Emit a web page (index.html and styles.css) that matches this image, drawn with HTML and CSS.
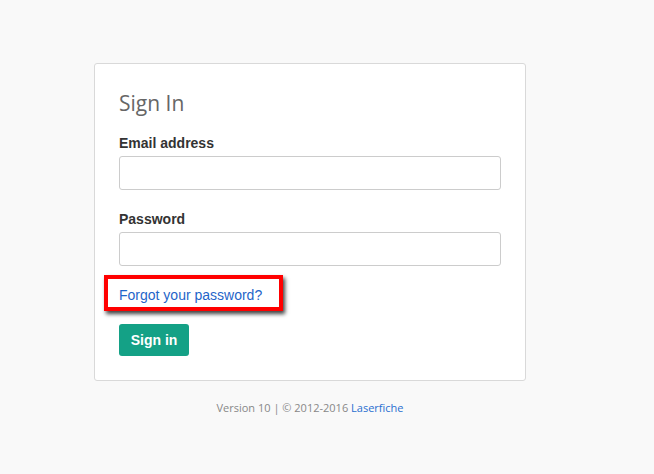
FILE: index.html
```html
<!DOCTYPE html>
<html>
<head>
<meta charset="utf-8">
<link rel="stylesheet" href="styles.css">
</head>
<body>
<div class="page">
  <div class="card">
    <h1 class="title">Sign In</h1>
    <div class="field">
      <label class="label">Email address</label>
      <input class="input" type="text">
    </div>
    <div class="field">
      <label class="label">Password</label>
      <input class="input" type="password">
    </div>
    <div class="forgot-wrap">
      <a class="forgot" href="#">Forgot your password?</a>
    </div>
    <button class="btn">Sign in</button>
  </div>
  <div class="footer">Version 10 | © 2012-2016 <a class="footer-link" href="#">Laserfiche</a></div>
</div>
</body>
</html>
```
FILE: styles.css
```css
html, body {
  margin: 0;
  padding: 0;
  background: #f9f9f9;
}
.page {
  padding: 63px 0 0 94px;
  width: 432px;
}
.card {
  box-sizing: border-box;
  width: 432px;
  height: 318px;
  background: #fff;
  border: 1px solid #d9d9d9;
  border-radius: 3px;
  padding: 25px 24px 0 24px;
}
.title {
  margin: 0;
  font-family: "Open Sans", sans-serif;
  font-weight: 400;
  font-size: 21px;
  line-height: 28px;
  color: #666;
}
.field {
  display: flex;
  flex-direction: column;
}
.field:first-of-type {
  margin-top: 16px;
}
.field + .field {
  margin-top: 19px;
}
.label {
  font-family: "Liberation Sans", Arial, sans-serif;
  font-weight: bold;
  font-size: 14px;
  line-height: 20px;
  color: #333;
  margin-bottom: 3px;
}
.input {
  box-sizing: border-box;
  height: 34px;
  width: 382px;
  border: 1px solid #ccc;
  border-radius: 3px;
  background: #fff;
  margin: 0;
}
.forgot-wrap {
  box-sizing: border-box;
  margin: 9px 0 0 -15px;
  width: 179px;
  height: 36px;
  border: 4px solid #f00;
  box-shadow: 2px 3px 4px rgba(0,0,0,0.75);
  padding: 7px 0 0 11px;
}
.forgot {
  font-family: "Liberation Sans", Arial, sans-serif;
  font-size: 14px;
  line-height: 16px;
  color: #1f65c9;
  text-decoration: none;
}
.btn {
  display: block;
  margin-top: 13px;
  width: 70px;
  height: 32px;
  background: #14a186;
  color: #fff;
  border: none;
  border-radius: 3px;
  font-family: "Liberation Sans", Arial, sans-serif;
  font-weight: bold;
  font-size: 14px;
  padding: 0;
}
.footer {
  margin-top: 20px;
  text-align: center;
  font-family: "Open Sans", sans-serif;
  font-size: 11px;
  line-height: 14px;
  color: #888;
}
.footer-link {
  color: #2a6fd0;
  text-decoration: none;
}
```
